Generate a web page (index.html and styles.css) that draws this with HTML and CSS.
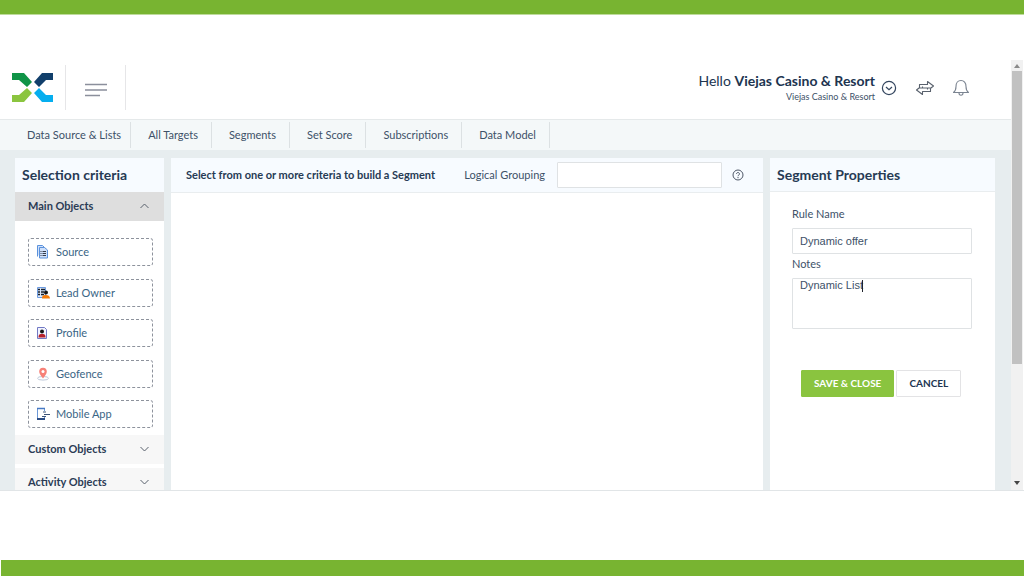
FILE: index.html
```html
<!DOCTYPE html>
<html lang="en">
<head>
<meta charset="utf-8">
<title>Segment builder</title>
<link rel="stylesheet" href="styles.css">
</head>
<body>
<div class="band band-top"></div>
<div class="app">
  <div class="main">
    <header class="header">
      <a class="logo" href="#" aria-label="Home">
        <svg width="42" height="30" viewBox="0 0 42 30">
          <path fill="#109447" d="M0 0h12l8 9-5 5-8-7H0z"/>
          <path fill="#113f6b" d="M41 0H30l-8 9 5 5 7-7h7z"/>
          <path fill="#8bc53f" d="M0 29h12l8-9-5-5-8 7H0z"/>
          <path fill="#05aeef" d="M41 29H30l-8-9 5-5 7 7h7z"/>
        </svg>
      </a>
      <button class="menu" aria-label="Menu">
        <svg width="24" height="14" viewBox="0 0 24 14" fill="none" stroke="#8b8f9c" stroke-width="1.600"><path d="M1 1.500h22M1 7h22M1 12.500h15"/></svg>
      </button>
      <div class="user">
        <div class="hello">Hello <b>Viejas Casino &amp; Resort</b></div>
        <div class="company">Viejas Casino &amp; Resort</div>
      </div>
      <button class="icon account" aria-label="Account">
        <svg width="16" height="16" viewBox="0 0 16 16" fill="none" stroke="#34465f" stroke-width="1.200"><circle cx="8" cy="8" r="6.600"/><path d="M5 7l3 2.800L11 7"/></svg>
      </button>
      <button class="icon switch" aria-label="Switch">
        <svg width="20" height="16" viewBox="0 0 20 16" fill="none" stroke="#59616d" stroke-width="1.100" stroke-linejoin="round"><path d="M4.500 8V4.500h8v-3l6 4.500-3.500 2.800M15.500 8v3.500h-8v3l-6-4.500L5 7.200M4.500 8h8v1.500M15.500 8h-8V6.500"/></svg>
      </button>
      <button class="icon bell" aria-label="Notifications">
        <svg width="18" height="18" viewBox="0 0 18 18" fill="none" stroke="#7b8491" stroke-width="1.100" stroke-linejoin="round"><path d="M1.500 13.500c2-1.500 2.500-3 2.500-6C4 4 6 1.500 9 1.500S14 4 14 7.500c0 3 .5 4.500 2.500 6zM7 14c0 3 4 3 4 0"/></svg>
      </button>
    </header>
    <nav class="nav">
      <a href="#">Data Source &amp; Lists</a>
      <a href="#">All Targets</a>
      <a href="#">Segments</a>
      <a href="#">Set Score</a>
      <a href="#">Subscriptions</a>
      <a href="#">Data Model</a>
    </nav>
    <div class="workspace">
      <aside class="panel">
        <h2 class="title">Selection criteria</h2>
        <button class="group open">Main Objects
          <svg width="9" height="6" viewBox="0 0 9 6" fill="none" stroke="#59616d"><path d="M.5 5l4-4 4 4"/></svg>
        </button>
        <div class="objects">
          <button class="object">
            <svg width="14" height="14" viewBox="0 0 14 14"><path fill="#cfe0fa" stroke="#5b92dc" d="M1.500 11.500V.5h5l2 2M3.500 13V2.500h5L11.500 5v8z"/><path stroke="#333b4a" d="M4.500 6.500h1m1 0H10m-5.500 2h1m1 0H10m-5.500 2h1m1 0H10"/></svg>
            Source</button>
          <button class="object">
            <svg width="14" height="14" viewBox="0 0 14 14"><path fill="#dce8fa" stroke="#6c9be0" d="M1.500 1.500h8v10h-8z"/><path stroke="#18202c" stroke-width="1.500" d="M2 3.500h2m1 0h4M2 6h2m1 0h3M2 8.500h2m1 0h3"/><circle cx="10" cy="6.500" r="2" fill="#171717"/><path fill="#f57c0a" d="M6 12.500c0-3.500 2-3.500 4-3.500s4 1 4 3.500z"/></svg>
            Lead Owner</button>
          <button class="object">
            <svg width="14" height="14" viewBox="0 0 14 14"><path fill="#f1f3ff" stroke="#7179c4" d="M1.500 1.500h7l2 2v9h-9z"/><circle cx="6" cy="5.500" r="2" fill="#151515"/><path fill="#b51f2b" d="M2.500 11.500C2.500 8 4 8 6 8s3.500 0 3.500 3.500z"/></svg>
            Profile</button>
          <button class="object">
            <svg width="14" height="14" viewBox="0 0 14 14"><ellipse cx="7" cy="11.300" rx="5.500" ry="1.800" fill="none" stroke="#bfc9da"/><path fill="#f78178" d="M7 11.500C4.500 8 3.200 6.500 3.200 4.500a3.800 3.800 0 0 1 7.600 0C10.800 6.500 9.500 8 7 11.500z"/><circle cx="7" cy="4.500" r="1.500" fill="#fff"/></svg>
            Geofence</button>
          <button class="object">
            <svg width="14" height="14" viewBox="0 0 14 14" fill="none"><path stroke="#6b98d8" d="M8.500 4V1.500h-7v11h7V10"/><path stroke="#4779c4" stroke-width="1.500" d="M1 1.500h8"/><path stroke="#2b4c83" stroke-width="2" d="M1 12h8"/><path stroke="#3d5478" d="M7 5h3M8 7.500h6M6 9.500h4"/></svg>
            Mobile App</button>
        </div>
        <button class="group">Custom Objects
          <svg width="9" height="6" viewBox="0 0 9 6" fill="none" stroke="#59616d"><path d="M.5 1l4 4 4-4"/></svg>
        </button>
        <button class="group">Activity Objects
          <svg width="9" height="6" viewBox="0 0 9 6" fill="none" stroke="#59616d"><path d="M.5 1l4 4 4-4"/></svg>
        </button>
      </aside>
      <section class="panel">
        <div class="builder-bar">
          <h3 class="hint">Select from one or more criteria to build a Segment</h3>
          <label class="grouping" for="grouping">Logical Grouping</label>
          <input class="field grouping-field" id="grouping" type="text">
          <button class="icon" aria-label="Help">
            <svg width="12" height="12" viewBox="0 0 12 12" fill="none" stroke="#4d5666"><circle cx="6" cy="6" r="5"/><path d="M4.500 5c0-2 3-2 3 0C7.500 6 6 6 6 7.200M6 8v1.200"/></svg>
          </button>
        </div>
      </section>
      <section class="panel">
        <h2 class="title ruled">Segment Properties</h2>
        <form class="form">
          <label for="rule">Rule Name</label>
          <input class="field" id="rule" type="text" value="Dynamic offer">
          <label for="notes">Notes</label>
          <div class="notes-box">
            <textarea class="field notes" id="notes">Dynamic List</textarea>
            <span class="caret"></span>
          </div>
          <div class="actions">
            <button class="btn save" type="button">SAVE &amp; CLOSE</button>
            <button class="btn" type="button">CANCEL</button>
          </div>
        </form>
      </section>
    </div>
  </div>
  <div class="scrollbar">
    <svg width="6" height="4" viewBox="0 0 6 4"><path fill="#8a8a8a" d="M0 4l3-4 3 4z"/></svg>
    <div class="track"><div class="thumb"></div></div>
    <svg width="6" height="4" viewBox="0 0 6 4"><path fill="#454545" d="M0 0l3 4 3-4z"/></svg>
  </div>
</div>
<div class="band band-bottom"></div>
</body>
</html>
```

FILE: styles.css
```css
* { box-sizing: border-box; }

body {
  margin: 0;
  height: 100vh;
  display: flex;
  flex-direction: column;
  background: #fff;
  color: #3d5168;
  font-family: Lato, sans-serif;
  font-size: 11px;
  line-height: 16px;
}

button, input, textarea { font: inherit; color: inherit; }
button { border: 0; padding: 0; background: none; }
a { color: inherit; text-decoration: none; }
svg { display: block; flex: none; }
h2, h3 { margin: 0; color: #263a54; font-weight: 700; }

.band { flex: none; background: #78b431; }
.band-top { height: 15px; border-bottom: 1px solid #bedb9b; }
.band-bottom { height: 16px; margin-left: 1px; }

.app {
  flex: 1;
  min-height: 0;
  display: flex;
  margin: 45px 0 69px;
  border-bottom: 1px solid #e1e5e7;
}
.main {
  flex: 1;
  min-width: 0;
  display: flex;
  flex-direction: column;
}

.header {
  flex: none;
  display: flex;
  align-items: center;
  height: 60px;
  padding: 0 41px 4px 12px;
  border-bottom: 1px solid #e5e9ea;
}
.logo { padding-right: 11px; }
.menu {
  height: 45px;
  padding: 4px 17px 0 18px;
  border: solid #e6e6e8;
  border-width: 0 1px;
}
.user { margin-left: auto; padding-top: 2px; text-align: right; }
.hello { font-size: 14px; color: #20344f; }
.company { font-size: 9px; }
.account { margin-left: 6px; }
.switch { margin-left: 18px; }
.bell { margin-left: 17px; }

.nav {
  flex: none;
  display: flex;
  align-items: center;
  height: 30px;
  padding-left: 10px;
  background: #f4f8f9;
}
.nav a {
  padding: 5px 13px 5px 17px;
  border-right: 1px solid #dce1e3;
}
.nav a:first-child { padding-right: 9px; }

.workspace {
  flex: 1;
  min-height: 0;
  display: grid;
  grid-template-columns: 149px 1fr 225px;
  gap: 7px;
  padding: 8px 16px 0 15px;
  background: #e7edef;
  overflow: hidden;
}
.panel { min-width: 0; background: #fff; }
.title {
  height: 34px;
  padding: 0 7px;
  background: #f7fbff;
  font-size: 14px;
  line-height: 34px;
}
.ruled { border-bottom: 1px solid #e9edef; }

.group {
  display: flex;
  align-items: center;
  justify-content: space-between;
  width: 100%;
  height: 29px;
  margin-bottom: 4px;
  padding: 0 15px 1px 13px;
  background: #f7f7f7;
  color: #2b3b55;
  font-weight: 700;
}
.open { background: #dedede; margin: 0; }

.objects {
  display: flex;
  flex-direction: column;
  justify-content: space-between;
  min-height: 214px;
  padding: 17px 11px 7px 13px;
}
.object {
  display: flex;
  align-items: center;
  gap: 6px;
  height: 28px;
  padding: 0 7px;
  border: 1px dashed #8d929c;
  border-radius: 3px;
  color: #3a6585;
}

.builder-bar {
  display: flex;
  align-items: center;
  height: 35px;
  padding: 0 19px 0 15px;
  background: #f7fbff;
  border-bottom: 1px solid #e9edef;
}
.hint { font-size: 11px; }
.grouping { margin: 0 12px 0 auto; }
.field {
  border: 1px solid #dfe2e4;
  border-radius: 1px;
  background: #fff;
  height: 26px;
  padding: 0 7px;
  outline: 0;
  font-family: "Liberation Sans", Arial, sans-serif;
  resize: none;
}
.grouping-field { width: 165px; margin-right: 10px; }

.form {
  display: flex;
  flex-direction: column;
  padding: 14px 23px 0 22px;
}
.form label { margin-bottom: 6px; }
.form input { margin-bottom: 2px; }
.notes-box { position: relative; }
.notes {
  display: block;
  width: 100%;
  height: 51px;
  line-height: 13px;
}
.caret {
  position: absolute;
  top: 2px;
  left: 70px;
  width: 1px;
  height: 12px;
  background: #20242c;
}
.actions {
  display: flex;
  gap: 2px;
  margin-top: 41px;
  padding-left: 9px;
}
.btn {
  height: 27px;
  padding: 0 12px 1px;
  border: 1px solid #e3e3e5;
  border-radius: 1px;
  background: #fff;
  color: #20344f;
  font-size: 10px;
  font-weight: 700;
}
.save { border-color: #8ac43f; background: #8ac43f; color: #fff; }

.scrollbar {
  flex: none;
  display: flex;
  flex-direction: column;
  align-items: center;
  width: 12px;
  margin-right: 1px;
  padding: 4px 0 5px;
  background: #f1f1f1;
}
.track { flex: 1; width: 10px; padding: 3px 0; }
.thumb { height: 72%; background: #c1c1c1; }
```
